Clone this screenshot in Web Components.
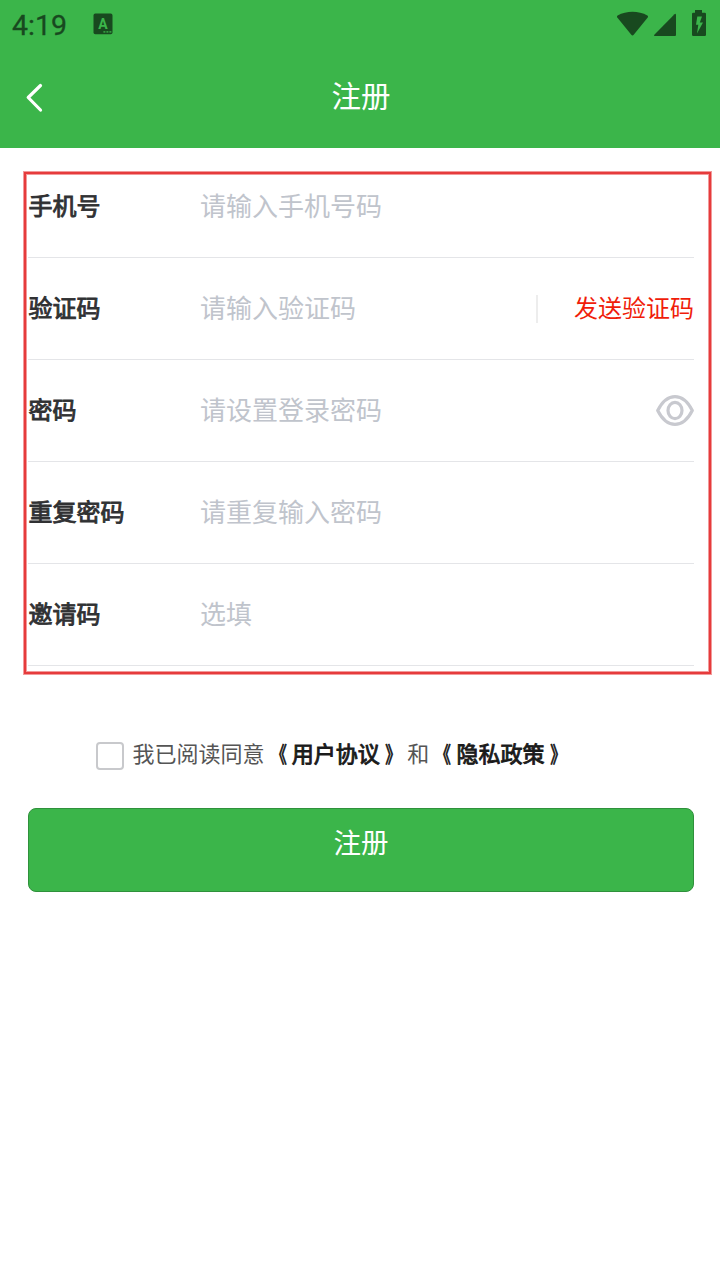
<!DOCTYPE html>
<html lang="zh-CN">
<head>
<meta charset="UTF-8">
<title>注册</title>
<style>
    body {
        margin: 0;
        background: #fff;
        font-family: "Noto Sans CJK SC", sans-serif;
    }
</style>
</head>
<body>
<register-page></register-page>

<script>
/**
 * <status-bar>: system bar with the clock and the device icons
 */
class StatusBar extends HTMLElement {
    constructor() {
        super();
        this.attachShadow({ mode: 'open' });
    }

    connectedCallback() {
        this.shadowRoot.innerHTML = `
            <style>
                :host {
                    display: flex;
                    align-items: flex-start;
                    height: 48px;
                    color: #18491f;
                    font-family: Roboto, sans-serif;
                }
                .time {
                    width: 81px;
                    padding: 9px 0 0 12px;
                    font-size: 28.5px;
                    line-height: 33px;
                    -webkit-text-stroke: 0.3px currentColor;
                }
                svg { display: block; fill: currentColor; }
                .app { margin-top: 13px; }
                .device { margin-left: auto; }
            </style>
            <span class="time">${this.getAttribute('time')}</span>
            <svg class="app" width="20" height="22" viewBox="0 0 20 22">
                <rect x="0.5" y="0.6" width="19" height="20.6" rx="1.8"/>
                <text x="10" y="15.6" text-anchor="middle" font-size="14" font-weight="700" fill="#3bb54a">A</text>
                <path d="M10.4 18h2v1.8h-2zM13.4 18h2v1.8h-2zM16.4 18h2v1.8h-2z" fill="#3bb54a" opacity=".75"/>
            </svg>
            <svg class="device" width="104" height="48" viewBox="0 0 104 48">
                <path d="M1.3 17.6C.7 16.8.9 16 1.6 15.5 10.6 10.6 22.4 10.6 31.4 15.5c.7.5.9 1.3.3 2.1L17.7 34.8c-.7.8-1.7.8-2.4 0z"/>
                <path d="M60 14.6v20.3q0 1.1-1.1 1.1H38.6q-1.2-.2-.3-1.2L58.5 14.2q1.2-1 1.5.4z"/>
                <path fill-rule="evenodd" d="M79 10h7v2.8h2.8q1.2 0 1.2 1.2v20.8q0 1.2-1.2 1.2H77.2q-1.2 0-1.2-1.2V14q0-1.2 1.2-1.2H79zM81.3 16.5 80 24.8h2.3L81 33.5 87 22.5h-3.2l2.2-6z"/>
            </svg>
        `;
    }
}

/**
 * <nav-header>: back arrow and centered page title
 */
class NavHeader extends HTMLElement {
    constructor() {
        super();
        this.attachShadow({ mode: 'open' });
    }

    connectedCallback() {
        this.shadowRoot.innerHTML = `
            <style>
                :host {
                    display: grid;
                    grid-template-columns: 70px 1fr 70px;
                    align-items: center;
                    height: 100px;
                    color: #fff;
                }
                svg { display: block; margin-left: 22px; }
                .title {
                    padding: 0 0 8px 2px;
                    text-align: center;
                    font-size: 29.5px;
                    line-height: 44px;
                }
            </style>
            <svg width="24" height="32" viewBox="0 0 24 32" fill="none" stroke="currentColor" stroke-width="3.2" stroke-linecap="round" stroke-linejoin="round">
                <path d="M18.5 3.5 6.2 15.5 18.5 28"/>
            </svg>
            <span class="title"><slot></slot></span>
        `;
    }
}

/**
 * <form-field>: label, placeholder and an optional action on the right
 */
class FormField extends HTMLElement {
    constructor() {
        super();
        this.attachShadow({ mode: 'open' });
    }

    connectedCallback() {
        this.shadowRoot.innerHTML = `
            <style>
                :host {
                    display: flex;
                    align-items: flex-end;
                    box-sizing: border-box;
                    height: 102px;
                    padding-bottom: 30px;
                    border-bottom: 1px solid #e4e5e8;
                    line-height: 40px;
                }
                :host([first]) { height: 84px; }
                .label {
                    box-sizing: border-box;
                    width: 172px;
                    padding: 0 0 2px 0.5px;
                    font-size: 24px;
                    color: #303133;
                    -webkit-text-stroke: 0.9px currentColor;
                }
                .placeholder {
                    flex: 1;
                    padding-bottom: 2px;
                    font-size: 26px;
                    color: #c0c4cc;
                }
            </style>
            <span class="label">${this.getAttribute('label')}</span>
            <span class="placeholder">${this.getAttribute('placeholder')}</span>
            <slot></slot>
        `;
    }
}

/**
 * <send-code>: red link with a divider before it
 */
class SendCode extends HTMLElement {
    constructor() {
        super();
        this.attachShadow({ mode: 'open' });
    }

    connectedCallback() {
        this.shadowRoot.innerHTML = `
            <style>
                :host {
                    display: flex;
                    align-items: center;
                    height: 40px;
                    font-size: 24px;
                    color: #f01d0a;
                }
                i {
                    width: 2px;
                    height: 28px;
                    margin-right: 36px;
                    background: #ededed;
                }
                span { padding-bottom: 4px; }
            </style>
            <i></i><span><slot></slot></span>
        `;
    }
}

class EyeIcon extends HTMLElement {
    constructor() {
        super();
        this.attachShadow({ mode: 'open' });
    }

    connectedCallback() {
        this.shadowRoot.innerHTML = `
            <style>
                :host { display: block; padding-bottom: 4px; }
                svg { display: block; }
            </style>
            <svg width="38" height="32" viewBox="0 0 38 32" fill="none" stroke="#c8c9cf" stroke-width="3.2">
                <path d="M1.7 15.5C6 7 12 1.6 19 1.6S32 7 36.3 15.5C32 24 26 29.4 19 29.4S6 24 1.7 15.5z" stroke-linejoin="round"/>
                <ellipse cx="19" cy="15.5" rx="7" ry="8.2"/>
            </svg>
        `;
    }
}

/**
 * <agree-check>: checkbox and the agreement text
 */
class AgreeCheck extends HTMLElement {
    constructor() {
        super();
        this.attachShadow({ mode: 'open' });
    }

    connectedCallback() {
        this.shadowRoot.innerHTML = `
            <style>
                :host {
                    display: flex;
                    height: 36px;
                    margin: 64px 0 0 96px;
                    font-size: 22px;
                    line-height: 28px;
                    color: #555;
                    white-space: nowrap;
                }
                .box {
                    box-sizing: border-box;
                    width: 28px;
                    height: 28px;
                    margin: 4px 8.5px 0 0;
                    border: 2px solid #c8c9cc;
                    border-radius: 4px;
                }
                ::slotted(b) {
                    color: #1a1a1a;
                    font-weight: 400;
                    word-spacing: 0.4px;
                    -webkit-text-stroke: 0.9px currentColor;
                }
            </style>
            <span class="box"></span>
            <span><slot></slot></span>
        `;
    }
}

/**
 * <submit-button>: main green button
 */
class SubmitButton extends HTMLElement {
    constructor() {
        super();
        this.attachShadow({ mode: 'open' });
    }

    connectedCallback() {
        this.shadowRoot.innerHTML = `
            <style>
                :host {
                    display: block;
                    box-sizing: border-box;
                    height: 84px;
                    margin: 34px 26px 0 28px;
                    padding-top: 12px;
                    border: 1px solid #2f913b;
                    border-radius: 8px;
                    background: #3bb54a;
                    color: #fff;
                    font-size: 27.5px;
                    line-height: 40px;
                    text-align: center;
                }
            </style>
            <slot></slot>
        `;
    }
}

/**
 * <register-page>: puts the whole page together
 */
class RegisterPage extends HTMLElement {
    constructor() {
        super();
        this.attachShadow({ mode: 'open' });
    }

    connectedCallback() {
        this.shadowRoot.innerHTML = `
            <style>
                :host {
                    display: block;
                    width: 720px;
                    height: 1280px;
                    overflow: hidden;
                }
                header { background: #3bb54a; }
                .fields {
                    box-sizing: border-box;
                    width: 687px;
                    margin: 24px 0 0 24px;
                    padding: 0 15px 6px 2px;
                    border: 2px solid #e63b3c;
                    box-shadow: 0 0 0 1px #f29a9a, inset 0 0 0 1px #f29a9a;
                }
                /* narrow title marks that lean towards the name */
                .open, .close { display: inline-block; transform: scaleX(0.72); }
                .open { transform-origin: 96% 50%; }
                .close { transform-origin: 4% 50%; }
            </style>
            <header>
                <status-bar time="4:19"></status-bar>
                <nav-header>注册</nav-header>
            </header>
            <div class="fields">
                <form-field first label="手机号" placeholder="请输入手机号码"></form-field>
                <form-field label="验证码" placeholder="请输入验证码"><send-code>发送验证码</send-code></form-field>
                <form-field label="密码" placeholder="请设置登录密码"><eye-icon></eye-icon></form-field>
                <form-field label="重复密码" placeholder="请重复输入密码"></form-field>
                <form-field label="邀请码" placeholder="选填"></form-field>
            </div>
            <agree-check>我已阅读同意<b><span class="open">《</span> 用户协议 <span class="close">》</span></b>和<b><span class="open">《</span> 隐私政策 <span class="close">》</span></b></agree-check>
            <submit-button>注册</submit-button>
        `;
    }
}

customElements.define('status-bar', StatusBar);
customElements.define('nav-header', NavHeader);
customElements.define('form-field', FormField);
customElements.define('send-code', SendCode);
customElements.define('eye-icon', EyeIcon);
customElements.define('agree-check', AgreeCheck);
customElements.define('submit-button', SubmitButton);
customElements.define('register-page', RegisterPage);
</script>
</body>
</html>
